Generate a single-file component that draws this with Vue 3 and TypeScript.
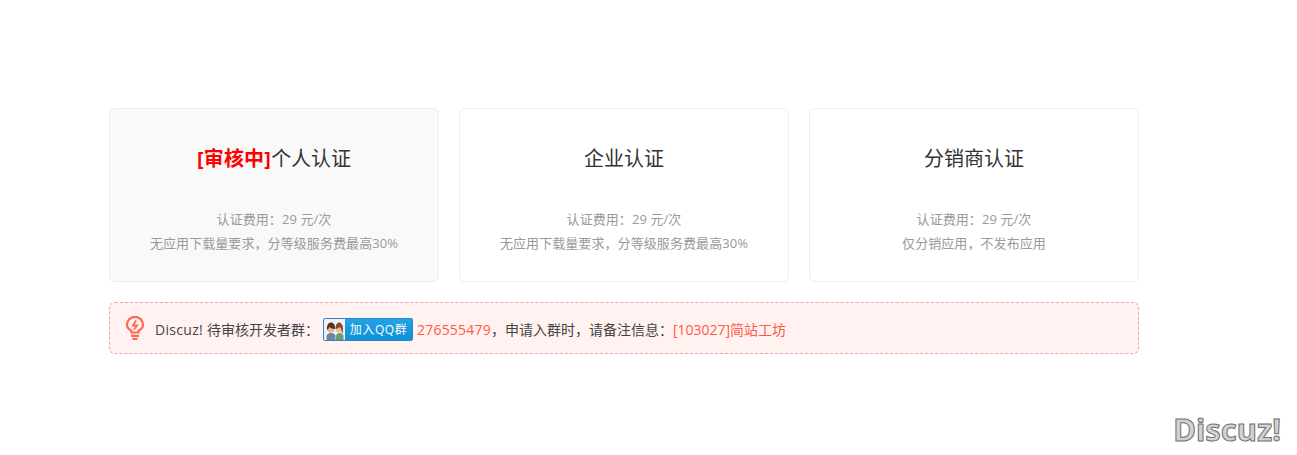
<script setup lang="ts">
interface Card { title: string; status?: string; fee: string; desc: string; active?: boolean }
const cards: Card[] = [
  { status: '[审核中]', title: '个人认证', fee: '认证费用：29 元/次', desc: '无应用下载量要求，分等级服务费最高30%', active: true },
  { title: '企业认证', fee: '认证费用：29 元/次', desc: '无应用下载量要求，分等级服务费最高30%' },
  { title: '分销商认证', fee: '认证费用：29 元/次', desc: '仅分销应用，不发布应用' },
]
</script>

<template>
  <div class="page">
    <div class="cards">
      <div v-for="c in cards" :key="c.title" class="card" :class="{ active: c.active }">
        <h3 class="title"><b v-if="c.status" class="status">{{ c.status }}</b>{{ c.title }}</h3>
        <p class="info">{{ c.fee }}<br />{{ c.desc }}</p>
      </div>
    </div>
    <div class="notice">
      <svg class="bulb" width="20" height="24" viewBox="0 0 20 24" fill="none" stroke="#ff6a55" stroke-width="2.200">
        <path d="M6.500 16.500v-1.800C4 13.500 2 11.500 2 8.800a8 8 0 0 1 16 0c0 2.700-2 4.700-4.500 5.900v1.800z" />
        <path d="M6 19.800h8M7.500 22.800h5" />
        <path d="M11 4.500 8 9.500h4l-3 4" stroke-width="1.900" />
      </svg>
      <span class="lead brand">Discuz!</span>
      <span class="lead wait">待审核开发者群：</span>
      <span class="qq">
        <span class="qq-face">
          <svg width="18" height="18" viewBox="0 0 18 18">
            <path d="M10 18v-4c0-1.500 1-2.500 3-3h1c2 .5 3.500 1.500 3.500 3v4z" fill="#6f9a74" />
            <path d="M0.500 18v-4c0-1.500 1.500-2.500 3.500-3h2c2 .5 3.500 1.500 3.500 3v4z" fill="#6f84a0" />
            <circle cx="5" cy="7" r="3.600" fill="#e8b48e" />
            <circle cx="13" cy="7" r="3.400" fill="#eebd96" />
            <path d="M1 8c-.5-5 1.500-7.500 4-7.500S9.500 3 9 7C7 7 4.500 6 3.500 5 3 6 2 7.500 1 8z" fill="#5a3020" />
            <path d="M9.500 7c0-4 1.500-6.500 3.500-6.500S17.500 3 17 8c0 2-.3 3-1 4 0-3-.5-5.500-2.500-7C12.500 6 11 7 9.500 7z" fill="#8a4a28" />
          </svg>
        </span>
        <span class="qq-text">加入QQ群</span>
      </span>
      <span class="hl num">276555479</span><span class="lead">，申请入群时，请备注信息：</span><span class="hl">[103027]简站工坊</span>
    </div>
    <div class="mark">Discuz!</div>
  </div>
</template>

<style>
html, body { margin: 0; background: #fff; }
</style>

<style scoped>
.page {
  position: relative;
  width: 1297px;
  height: 455px;
  box-sizing: border-box;
  padding: 108px 158px 0 109px;
  overflow: hidden;
  font-family: "Open Sans", "Noto Sans CJK SC", sans-serif;
}
.cards { display: flex; gap: 20px; }
.card {
  flex: 1;
  height: 174px;
  box-sizing: border-box;
  border: 1px solid #eeeeee;
  border-radius: 6px;
  padding: 36px 10px 0;
  text-align: center;
}
.card.active { background: #f9f9f9; }
.title {
  margin: 0;
  height: 28px;
  font-size: 20px;
  line-height: 28px;
  font-weight: 400;
  color: #333;
}
.status { color: #ff0000; font-weight: 700; letter-spacing: 0.2px; }
.info {
  margin: 34px 0 0;
  font-size: 13px;
  line-height: 24px;
  letter-spacing: 0.08px;
  color: #999;
}
.notice {
  display: flex;
  align-items: center;
  height: 52px;
  margin-top: 20px;
  box-sizing: border-box;
  border: 1px dashed #ff9c9c;
  border-radius: 6px;
  background: #fff2f1;
  padding: 2px 0 0 15px;
  font-size: 14px;
  color: #444;
}
.bulb { flex: none; margin-right: 10px; margin-top: -2px; }
.lead { white-space: nowrap; }
.brand { letter-spacing: 0.3px; }
.wait { margin-left: 4px; }
.hl { color: #ff5a45; white-space: nowrap; }
.num { letter-spacing: 0.2px; }
.qq {
  display: flex;
  flex: none;
  width: 90px;
  height: 23px;
  margin: 0 4px 0 4px;
  box-sizing: border-box;
  border: 1px solid #2f86c7;
  border-radius: 2px;
  background: linear-gradient(#22a4e6, #0f8fd8);
  overflow: hidden;
}
.qq-face {
  flex: none;
  width: 21px;
  background: #eef2f6;
  display: flex;
  align-items: flex-end;
  justify-content: center;
}
.qq-text {
  flex: 1;
  text-align: center;
  color: #fff;
  font-size: 12px;
  letter-spacing: 0.6px;
  line-height: 21px;
  white-space: nowrap;
}
.mark {
  position: absolute;
  right: 16px;
  top: 408px;
  font-family: "Noto Sans", sans-serif;
  font-size: 31px;
  line-height: 42px;
  font-weight: 700;
  color: #d2d2d2;
  -webkit-text-stroke: 1px #6f6f6f;
}
</style>
